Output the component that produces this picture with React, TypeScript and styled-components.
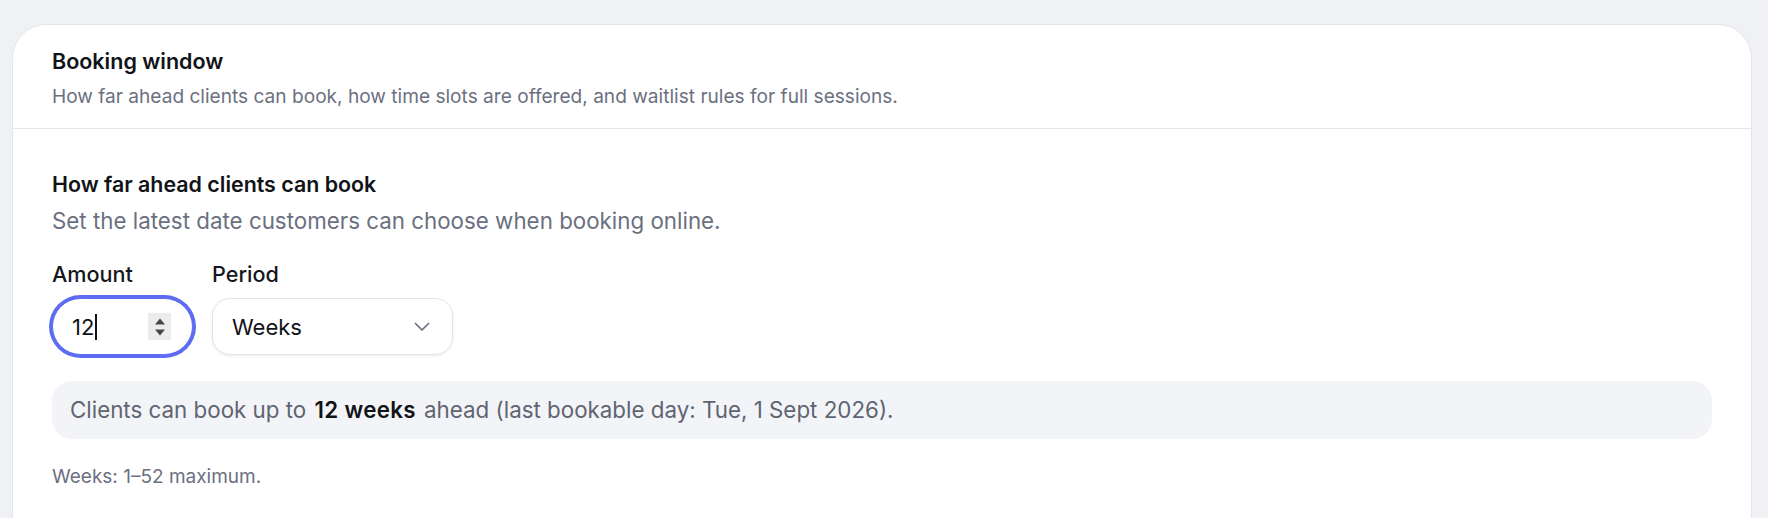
import React from "react";
import styled, { createGlobalStyle } from "styled-components";

const GlobalStyle = createGlobalStyle`
  html, body {
    margin: 0;
    padding: 0;
    height: 100%;
    overflow: hidden;
    background: #f0f1f5;
  }
  body {
    font-family: "Inter", "Noto Sans", sans-serif;
    -webkit-font-smoothing: antialiased;
  }
  * { box-sizing: border-box; }
`;

const Page = styled.div`
  padding: 24px 16px 0 12px;
`;

const Card = styled.section`
  background: #ffffff;
  border: 1px solid #e3e5ea;
  border-radius: 34px;
  overflow: hidden;
`;

const CardHeader = styled.header`
  padding: 22px 39px 19px;
  border-bottom: 1px solid #e4e6eb;
`;

const CardTitle = styled.h2`
  margin: 0;
  font-size: 21.5px;
  line-height: 28px;
  font-weight: 600;
  color: #111318;
`;

const CardDescription = styled.p`
  margin: 8px 0 0;
  font-size: 19.1px;
  line-height: 26px;
  font-weight: 400;
  color: #6b7080;
`;

const CardBody = styled.div`
  padding: 41px 39px 60px;
`;

const SectionTitle = styled.h3`
  margin: 0;
  font-size: 21.4px;
  line-height: 28px;
  font-weight: 600;
  color: #111318;
`;

const SectionHint = styled.p`
  margin: 8px 0 0;
  font-size: 22.35px;
  line-height: 30px;
  font-weight: 400;
  color: #6b7080;
`;

const FieldRow = styled.div`
  display: flex;
  gap: 19px;
  margin-top: 24px;
`;

const Field = styled.div`
  display: flex;
  flex-direction: column;
  gap: 10px;
`;

const Label = styled.label`
  font-size: 21.6px;
  line-height: 28px;
  font-weight: 500;
  color: #16171c;
`;

const NumberBox = styled.div`
  width: 141px;
  height: 57px;
  display: flex;
  align-items: center;
  padding: 0 21px 0 19px;
  border: 1px solid #5d6cf0;
  border-radius: 999px;
  box-shadow: 0 0 0 3px #5d6cf0;
  background: #ffffff;
`;

const NumberValue = styled.span`
  font-size: 22px;
  line-height: 28px;
  color: #111318;
  display: flex;
  align-items: center;
`;

const Caret = styled.span`
  display: inline-block;
  width: 1.5px;
  height: 26px;
  margin-left: 1px;
  background: #111318;
`;

const Spinner = styled.span`
  margin-left: auto;
  width: 23px;
  height: 27px;
  background: #ececec;
  display: flex;
  align-items: center;
  justify-content: center;
`;

const SelectBox = styled.div`
  width: 241px;
  height: 57px;
  display: flex;
  align-items: center;
  justify-content: space-between;
  padding: 0 22px 0 19px;
  border: 1px solid #e2e4e9;
  border-radius: 18px;
  background: #ffffff;
  box-shadow: 0 1px 3px rgba(16, 24, 40, 0.08);
  font-size: 22px;
  line-height: 28px;
  color: #111318;
`;

const Summary = styled.div`
  margin-top: 26px;
  height: 58px;
  display: flex;
  align-items: center;
  padding: 0 18px;
  border-radius: 20px;
  background: #f3f4f7;
  font-size: 22.35px;
  line-height: 28px;
  color: #5f6472;
`;

const Strong = styled.strong`
  font-weight: 600;
  letter-spacing: 0.3px;
  padding: 0 2px;
  color: #111318;
`;

const Footnote = styled.p`
  margin: 25px 0 0;
  font-size: 19px;
  line-height: 26px;
  color: #6b7080;
`;

const SpinnerIcon = () => (
  <svg width="12" height="22" viewBox="0 0 12 22" aria-hidden="true">
    <path d="M1 8.5 L6 2.5 L11 8.5 Z" fill="#474747" />
    <path d="M1 13.5 L6 19.5 L11 13.5 Z" fill="#474747" />
  </svg>
);

const ChevronDown = () => (
  <svg width="16" height="10" viewBox="0 0 16 10" aria-hidden="true">
    <path
      d="M1.5 1.5 L8 8 L14.5 1.5"
      fill="none"
      stroke="#6b7080"
      strokeWidth="1.7"
      strokeLinecap="round"
      strokeLinejoin="round"
    />
  </svg>
);

export default function App() {
  return (
    <>
      <GlobalStyle />
      <Page>
        <Card>
          <CardHeader>
            <CardTitle>Booking window</CardTitle>
            <CardDescription>
              How far ahead clients can book, how time slots are offered, and waitlist rules for full sessions.
            </CardDescription>
          </CardHeader>
          <CardBody>
            <SectionTitle>How far ahead clients can book</SectionTitle>
            <SectionHint>Set the latest date customers can choose when booking online.</SectionHint>
            <FieldRow>
              <Field>
                <Label>Amount</Label>
                <NumberBox>
                  <NumberValue>
                    12
                    <Caret />
                  </NumberValue>
                  <Spinner>
                    <SpinnerIcon />
                  </Spinner>
                </NumberBox>
              </Field>
              <Field>
                <Label>Period</Label>
                <SelectBox>
                  <span>Weeks</span>
                  <ChevronDown />
                </SelectBox>
              </Field>
            </FieldRow>
            <Summary>
              <span>
                Clients can book up to <Strong>12 weeks</Strong> ahead (last bookable day: Tue, 1 Sept 2026).
              </span>
            </Summary>
            <Footnote>Weeks: 1–52 maximum.</Footnote>
          </CardBody>
        </Card>
      </Page>
    </>
  );
}
